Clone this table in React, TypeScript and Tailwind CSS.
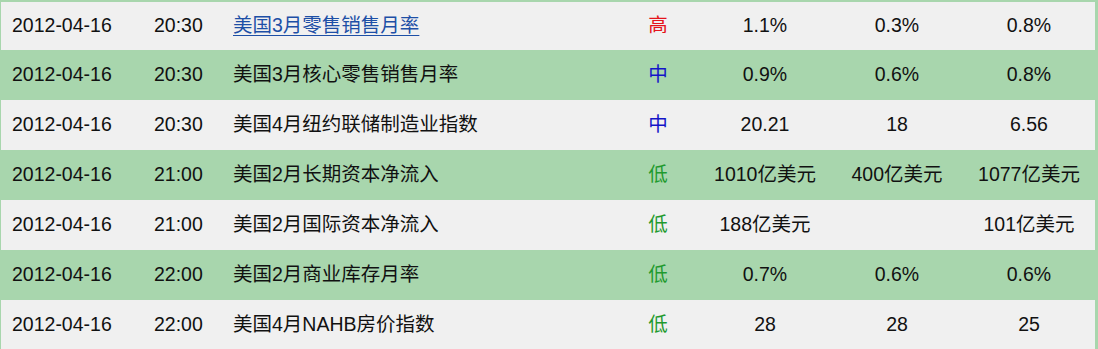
import React from "react";

type Level = "高" | "中" | "低";

type Row = {
  date: string;
  time: string;
  event: string;
  link?: boolean;
  level: Level;
  actual: string;
  forecast: string;
  prior: string;
};

const rows: Row[] = [
  { date: "2012-04-16", time: "20:30", event: "美国3月零售销售月率", link: true, level: "高", actual: "1.1%", forecast: "0.3%", prior: "0.8%" },
  { date: "2012-04-16", time: "20:30", event: "美国3月核心零售销售月率", level: "中", actual: "0.9%", forecast: "0.6%", prior: "0.8%" },
  { date: "2012-04-16", time: "20:30", event: "美国4月纽约联储制造业指数", level: "中", actual: "20.21", forecast: "18", prior: "6.56" },
  { date: "2012-04-16", time: "21:00", event: "美国2月长期资本净流入", level: "低", actual: "1010亿美元", forecast: "400亿美元", prior: "1077亿美元" },
  { date: "2012-04-16", time: "21:00", event: "美国2月国际资本净流入", level: "低", actual: "188亿美元", forecast: "", prior: "101亿美元" },
  { date: "2012-04-16", time: "22:00", event: "美国2月商业库存月率", level: "低", actual: "0.7%", forecast: "0.6%", prior: "0.6%" },
  { date: "2012-04-16", time: "22:00", event: "美国4月NAHB房价指数", level: "低", actual: "28", forecast: "28", prior: "25" },
];

// importance colour per level
const levelColor: Record<Level, string> = {
  高: "text-[#e5141b]",
  中: "text-[#1414c8]",
  低: "text-[#1f9a2e]",
};

export default function App() {
  return (
    <div
      className="w-[1098px] h-[349px] overflow-hidden bg-[#a8d6ad] pt-[2px] pl-[1px] pr-[3px] text-[19.5px] text-[#111]"
      style={{ fontFamily: '"Liberation Sans", Arial, "Noto Sans CJK SC", sans-serif' }}
    >
      {rows.map((r, i) => (
        <div
          key={i}
          className={`flex items-center ${i === 0 ? "h-[48px]" : "h-[50px]"} ${
            i % 2 === 0 ? "bg-[#f0f0f0]" : ""
          }`}
        >
          <div className="w-[141px] pl-[11px] whitespace-nowrap">{r.date}</div>
          <div className="w-[80px] pl-[12px] whitespace-nowrap">{r.time}</div>
          <div className="w-[395px] pl-[11px] whitespace-nowrap">
            {r.link ? (
              <span className="text-[#1d4fa6] underline underline-offset-[3px]">{r.event}</span>
            ) : (
              r.event
            )}
          </div>
          <div className={`w-[82px] text-center ${levelColor[r.level]}`}>{r.level}</div>
          <div className="w-[132px] text-center whitespace-nowrap">{r.actual}</div>
          <div className="w-[132px] text-center whitespace-nowrap">{r.forecast}</div>
          <div className="w-[132px] text-center whitespace-nowrap">{r.prior}</div>
        </div>
      ))}
    </div>
  );
}
